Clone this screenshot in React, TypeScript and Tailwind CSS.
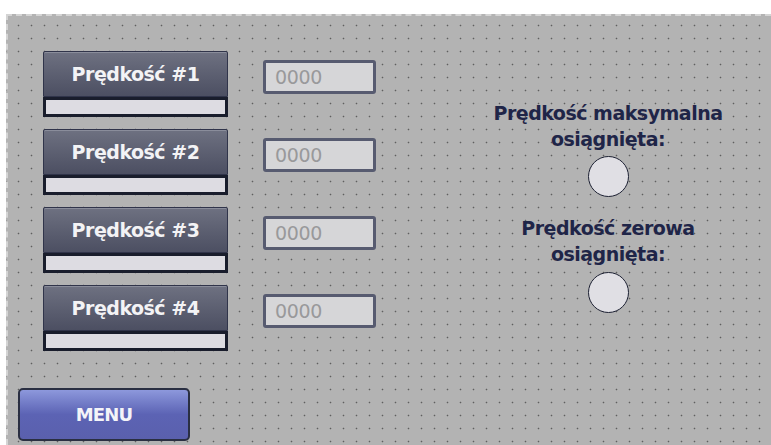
import React from 'react';

const SPEEDS = ['Prędkość #1', 'Prędkość #2', 'Prędkość #3', 'Prędkość #4'];

function SpeedRow({ label }: { label: string }) {
  return (
    <div className="flex items-start">
      {/* button with progress strip underneath */}
      <div className="flex flex-col w-[185px]">
        <div className="h-[46px] flex items-center justify-center rounded-t-[2px] border border-[#30344a] bg-gradient-to-b from-[#6e7181] to-[#4c4f62] shadow-[inset_0_1px_0_#8a8d9b]">
          <span className="text-[19px] font-bold text-[#f3f3f5] tracking-[-0.5px]">{label}</span>
        </div>
        <div className="h-[20px] border-[3px] border-[#191d2c] bg-[#dddce2]" />
      </div>
      <div className="ml-[35px] mt-[9px] w-[113px] h-[34px] rounded-[3px] border-[3px] border-[#575b70] bg-[#d6d6d8] flex items-center pl-[9px]">
        <span className="text-[19px] font-medium text-[#99999b] leading-none tracking-[-0.3px]">0000</span>
      </div>
    </div>
  );
}

function Lamp() {
  return <div className="w-[41px] h-[41px] rounded-full border-[1.5px] border-[#1c2032] bg-[#e0dfe4]" />;
}

export default function App() {
  return (
    <div
      className="w-[771px] h-[445px] bg-white pt-[14px] pl-[6px] flex overflow-hidden"
      style={{ fontFamily: '"DejaVu Sans", Verdana, sans-serif' }}
    >
      <div className="flex-1 flex border-t-2 border-l-2 border-dashed border-[#d4d4d4] bg-[#b3b3b3] bg-[radial-gradient(circle,#5f5f5f_0.7px,transparent_1.1px)] bg-[length:13px_13px] bg-[position:4px_3px]">
        <div className="flex flex-col pl-[35px] pt-[35px]">
          <div className="flex flex-col gap-[12px]">
            {SPEEDS.map((s) => (
              <SpeedRow key={s} label={s} />
            ))}
          </div>
          <button className="mt-[37px] -ml-[25px] w-[172px] h-[53px] rounded-[5px] border-2 border-[#2a2f42] bg-gradient-to-b from-[#8d98dc] via-[#5c63b4] to-[#5a60ad] flex items-center justify-center">
            <span className="text-[18px] font-bold text-[#f4f4f8] tracking-[-0.8px]">MENU</span>
          </button>
        </div>

        {/* status lamps */}
        <div className="ml-[102px] w-[260px] pt-[84px] flex flex-col items-center text-[#1f2548] font-bold text-[19px] tracking-[-0.5px] leading-[26px] text-center">
          <div>
            Prędkość maksymalna
            <br />
            osiągnięta:
          </div>
          <div className="mt-[4px]">
            <Lamp />
          </div>
          <div className="mt-[18px]">
            Prędkość zerowa
            <br />
            osiągnięta:
          </div>
          <div className="mt-[5px]">
            <Lamp />
          </div>
        </div>
      </div>
    </div>
  );
}
